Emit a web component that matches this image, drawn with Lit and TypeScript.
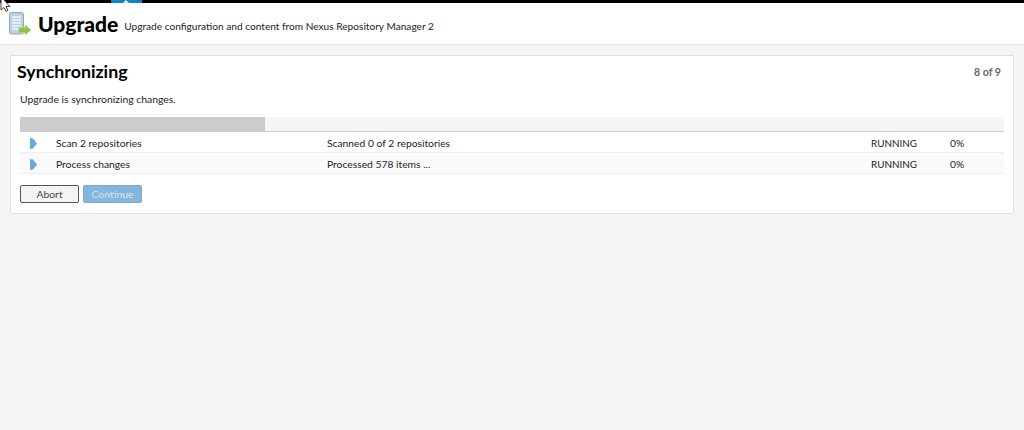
import { LitElement, html, css } from "lit";
import { customElement } from "lit/decorators.js";

const rows = [
  ["Scan 2 repositories", "Scanned 0 of 2 repositories", "RUNNING", "0%"],
  ["Process changes", "Processed 578 items ...", "RUNNING", "0%"],
];

@customElement("app-root")
export class AppRoot extends LitElement {
  static styles = css`
    :host { display: block; height: 430px; overflow: hidden; position: relative; background: #f4f4f4; font-family: "Lato", "Open Sans", sans-serif; color: #222; font-size: 10.3px; }
    .topbar { height: 3px; background: #000; display: flex; padding-left: 111px; }
    .topbar svg { display: block; }
    .cursor { position: absolute; left: 0; top: 0; }
    .header { height: 42px; box-sizing: border-box; background: #fff; border-bottom: 1px solid #e6e6e6; display: flex; align-items: center; padding: 0 0 0 9px; }
    .logo { margin-right: 7px; display: block; }
    h1 { margin: 0 6px 0 0; font-size: 21px; font-weight: 900; color: #000; line-height: 28px; }
    .sub { font-size: 10.15px; color: #222; padding-top: 5px; }
    .panel { margin: 10px 10px 0; height: 159px; box-sizing: border-box; background: #fff; border: 1px solid #e0e0e0; padding: 0 9px; }
    .title { display: flex; justify-content: space-between; align-items: center; height: 30px; }
    h2 { margin: 0 0 0 -3px; font-size: 17.8px; font-weight: 700; color: #000; }
    .step { font-size: 10.6px; font-weight: 700; color: #666; padding-right: 3px; padding-top: 1px; }
    .desc { margin-top: 6px; height: 14px; line-height: 14px; font-size: 10.4px; }
    .bar { margin-top: 11px; height: 15px; box-sizing: border-box; background: #f5f5f5; border-bottom: 1px solid #ccc; }
    .fill { height: 14px; width: 245px; background: #cccccc; }
    .row { display: grid; grid-template-columns: 36px 271px 544px 79px 1fr; align-items: center; height: 21px; box-sizing: border-box; padding-top: 1px; border-bottom: 1px solid #eee; }
    .row:nth-of-type(even) { background: #fafafa; }
    .row svg { display: block; margin: 2px 0 0 10px; }
    .status { font-size: 9.9px; }
    .buttons { display: flex; gap: 4px; margin-top: 11px; }
    .btn { width: 59px; height: 18px; box-sizing: border-box; border-radius: 2px; display: flex; align-items: center; justify-content: center; font-size: 10.4px; }
    .abort { border: 1px solid #555; background: #f4f4f4; color: #444; }
    .cont { border: 1px solid #7fa8c9; background: #84b5dc; color: #d5e5f2; }
  `;

  render() {
    return html`
      <div class="topbar">
        <svg width="31" height="3" viewBox="0 0 31 3">
          <rect width="31" height="3" fill="#1a7fc9"/>
          <path d="M12 3l3-3 3 3z" fill="#dbeaf5"/>
        </svg>
      </div>
      <div class="header">
        <svg class="logo" width="22" height="24" viewBox="0 0 22 24">
          <rect x="0.5" y="0.5" width="14" height="21.500" rx="2" fill="#bcd0df" stroke="#8fa8bb"/>
          <path d="M3 5h9M3 8h9M3 11h9M3 14h9M3 17h6" stroke="#f3f7fa" stroke-width="1.500"/>
          <path d="M10 15.500h6V13l6 5-6 5v-2.500h-6z" fill="#8fc43f" stroke="#b5d97c" stroke-width="0.500"/>
        </svg>
        <h1>Upgrade</h1>
        <span class="sub">Upgrade configuration and content from Nexus Repository Manager 2</span>
      </div>
      <div class="panel">
        <div class="title"><h2>Synchronizing</h2><span class="step">8 of 9</span></div>
        <div class="desc">Upgrade is synchronizing changes.</div>
        <div class="bar"><div class="fill"></div></div>
        <div class="rows">
          ${rows.map(
            (r) => html`<div class="row">
              <svg width="7" height="11" viewBox="0 0 7 11"><path d="M0 0l3 .5 4 5-4 5-3 .5z" fill="#6aa9da"/></svg>
              <span>${r[0]}</span><span>${r[1]}</span><span class="status">${r[2]}</span><span>${r[3]}</span>
            </div>`
          )}
        </div>
        <div class="buttons">
          <div class="btn abort">Abort</div>
          <div class="btn cont">Continue</div>
        </div>
      </div>
      <svg class="cursor" width="12" height="14" viewBox="0 0 12 14">
        <path d="M1 -3v13l3-2.500 2 4 2-1-2-4h4z" fill="#fff" stroke="#444" stroke-width="1"/>
      </svg>
    `;
  }
}
